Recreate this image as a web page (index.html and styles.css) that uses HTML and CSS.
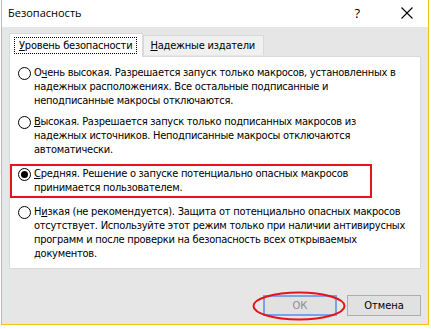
FILE: index.html
```html
<!DOCTYPE html>
<html lang="ru">
<head>
    <meta charset="UTF-8">
    <title>Безопасность</title>
    <link rel="stylesheet" href="styles.css">
</head>
<body>
    <div class="window">
        <div class="titlebar">
            <span class="title">Безопасность</span>
            <span class="help">?</span>
            <svg class="close" width="12" height="12" viewBox="0 0 12 12">
                <path d="M0.5 0.5 L11.5 11.5 M11.5 0.5 L0.5 11.5" stroke="#000" stroke-width="1.1" fill="none"/>
            </svg>
        </div>
        <div class="content">
            <div class="tabs">
                <div class="tab active"><span class="focus"><u>У</u>ровень безопасности</span></div>
                <div class="tab"><u>Н</u>адежные издатели</div>
            </div>
            <div class="panel">
                <label class="option">
                    <span class="radio"></span>
                    <span class="text">О<u>ч</u>ень высокая. Разрешается запуск только макросов, установленных в<br>надежных расположениях. Все остальные подписанные и<br>неподписанные макросы отключаются.</span>
                </label>
                <label class="option">
                    <span class="radio"></span>
                    <span class="text"><u>В</u>ысокая. Разрешается запуск только подписанных макросов из<br>надежных источников. Неподписанные макросы отключаются<br>автоматически.</span>
                </label>
                <label class="option marked">
                    <span class="radio checked"></span>
                    <span class="text"><u>С</u>редняя. Решение о запуске потенциально опасных макросов<br>принимается пользователем.</span>
                </label>
                <label class="option">
                    <span class="radio"></span>
                    <span class="text">Н<u>и</u>зкая (не рекомендуется). Защита от потенциально опасных макросов<br>отсутствует. Используйте этот режим только при наличии антивирусных<br>программ и после проверки на безопасность всех открываемых<br>документов.</span>
                </label>
            </div>
            <div class="buttons">
                <div class="btn-wrap">
                    <button class="btn ok">ОК</button>
                    <svg class="circle" width="94" height="30" viewBox="0 0 94 30">
                        <ellipse cx="47" cy="15" rx="45.5" ry="13.5" stroke="#e4141b" stroke-width="2" fill="none"/>
                    </svg>
                </div>
                <button class="btn">Отмена</button>
            </div>
        </div>
    </div>
</body>
</html>
```

FILE: styles.css
```css
body {
    margin: 0;
    background: #fff;
    font-family: 'DejaVu Sans Condensed', 'Liberation Sans', sans-serif;
    font-size: 11px;
    color: #000;
}

.window {
    width: 426px;
    height: 324px;
    margin-left: 1px;
    border: 1px solid #f2c40f;
    border-top: none;
    display: flex;
    flex-direction: column;
    background: #e6e6e6;
}

.titlebar {
    height: 27px;
    background: #fff;
    display: flex;
    align-items: center;
    padding-left: 6px;
}

.title {
    font-family: 'Open Sans', sans-serif;
    font-size: 11px;
    flex: 1;
    padding-bottom: 2px;
}

.help {
    font-family: 'Open Sans', sans-serif;
    font-size: 13px;
    margin-right: 41px;
    padding-bottom: 2px;
}

.close {
    margin-right: 15px;
    margin-bottom: 2px;
}

.content {
    flex: 1;
    padding: 6px 7px 0 7px;
    display: flex;
    flex-direction: column;
}

.tabs {
    display: flex;
    align-items: flex-end;
    height: 23px;
    position: relative;
    z-index: 1;
    letter-spacing: -0.2px;
}

.tab {
    height: 19px;
    padding: 0 8px 0 6px;
    display: flex;
    align-items: center;
    background: #f0f0f0;
    border: 1px solid #d9d9d9;
    border-bottom: none;
    margin-bottom: 1px;
}

.tab.active {
    height: 23px;
    padding: 0 5px 0 4px;
    background: #fff;
    border-color: #d9d9d9;
    margin-bottom: -1px;
}

.focus {
    border: 1px dotted #000;
    padding: 1px 4px;
}

.panel {
    height: 213px;
    background: #fff;
    border: 1px solid #d9d9d9;
    padding: 9px 0 0 0;
    box-sizing: border-box;
}

.option {
    display: flex;
    align-items: flex-start;
    line-height: 14px;
    padding-left: 8px;
    margin-bottom: 7px;
    letter-spacing: -0.25px;
    white-space: nowrap;
}

.option.marked {
    border: 2px solid #e4141b;
    padding: 1px 0 1px 6px;
    margin-right: 48px;
}

.radio {
    width: 11px;
    height: 11px;
    border: 1px solid #000;
    border-radius: 50%;
    margin: 1px 3px 0 0;
    flex: none;
    display: flex;
    align-items: center;
    justify-content: center;
}

.radio.checked::after {
    content: '';
    width: 7px;
    height: 7px;
    border-radius: 50%;
    background: #000;
}

.buttons {
    display: flex;
    justify-content: flex-end;
    gap: 10px;
    margin-top: 26px;
}

.btn-wrap {
    position: relative;
}

.btn {
    width: 74px;
    height: 21px;
    font-family: 'DejaVu Sans Condensed', 'Liberation Sans', sans-serif;
    font-size: 11px;
    background: #e1e1e1;
    border: 1px solid #adadad;
    padding: 0;
    color: #000;
}

.btn.ok {
    border: 2px solid #7aa3e5;
    color: #8c8c8c;
}

.circle {
    position: absolute;
    left: -11px;
    top: -4px;
}
```
